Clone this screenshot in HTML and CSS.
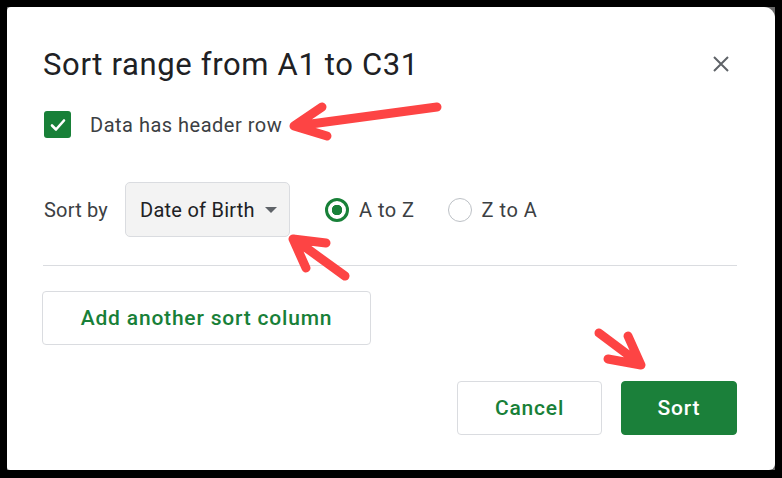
FILE: index.html
```html
<!DOCTYPE html>
<html lang="en">
<head>
    <meta charset="UTF-8">
    <meta name="viewport" content="width=device-width, initial-scale=1.0">
    <title>Sort range</title>
    <link rel="stylesheet" href="styles.css">
</head>
<body>

    <div class="frame">
        <div class="dialog">
            <div class="header">
                <h1 class="title">Sort range from A1 to C31</h1>
                <svg class="close" width="16" height="16" viewBox="0 0 16 16">
                    <path d="M1 1 L15 15 M15 1 L1 15" stroke="#5f6368" stroke-width="2" fill="none"/>
                </svg>
            </div>

            <label class="check-row">
                <span class="checkbox">
                    <svg width="18" height="18" viewBox="0 0 18 18">
                        <path d="M3 9.5 L7 13.5 L15 4.5" stroke="#fff" stroke-width="2.6" fill="none" stroke-linecap="round" stroke-linejoin="round"/>
                    </svg>
                </span>
                <span class="label">Data has header row</span>
            </label>

            <div class="sort-row">
                <span class="label">Sort by</span>
                <div class="select">
                    <span>Date of Birth</span>
                    <span class="caret"></span>
                </div>
                <div class="radios">
                    <span class="radio checked"></span>
                    <span class="label">A to Z</span>
                    <span class="radio"></span>
                    <span class="label">Z to A</span>
                </div>
            </div>

            <div class="divider"></div>

            <div class="add-row">
                <button class="btn outline add">Add another sort column</button>
            </div>

            <div class="footer">
                <button class="btn outline cancel">Cancel</button>
                <button class="btn primary sort">Sort</button>
            </div>
        </div>
    </div>

    <!-- red annotation arrows over the dialog -->
    <svg class="notes" width="782" height="478" viewBox="0 0 782 478">
        <g stroke="#fd4444" stroke-width="9" fill="none" stroke-linecap="round" stroke-linejoin="round">
            <path d="M437 107 L296 126 M322 107 L294 126 L327 136"/>
            <path d="M345 276 L294 239 M326 243 L293 239 L306 268"/>
            <path d="M599 333 L639 363 M608 359 L641 365 L628 336"/>
        </g>
    </svg>

</body>
</html>
```

FILE: styles.css
```css
/* page and outer frame */
body {
    margin: 0;
    padding: 7px 7px 8px 7px;
    background: #000;
    font-family: Roboto, "Liberation Sans", sans-serif;
    position: relative;
}

.frame {
    background: #6a6a6a;
    height: 463px;
}

.dialog {
    background: #fff;
    height: 100%;
    box-sizing: border-box;
    border-radius: 4px 11px 6px 3px;
    padding: 33px 38px 0 35px;
}

/* title row */
.header {
    display: flex;
    align-items: center;
    justify-content: space-between;
    height: 48px;
}

.title {
    margin: 0 0 0 1px;
    font-size: 31px;
    font-weight: 400;
    letter-spacing: 0.65px;
    color: #202124;
}

.close {
    margin-right: 8px;
}

.label {
    font-size: 20px;
    letter-spacing: 0.5px;
    color: #3c4043;
}

/* checkbox */
.check-row {
    display: flex;
    align-items: center;
    margin-top: 23px;
    height: 27px;
}

.checkbox {
    width: 27px;
    height: 27px;
    margin-left: 2px;
    border-radius: 3px;
    background: #188038;
    display: flex;
    align-items: center;
    justify-content: center;
}

.check-row .label {
    margin-left: 19px;
}

/* sort by row */
.sort-row {
    display: flex;
    align-items: center;
    margin-top: 44px;
    height: 55px;
}

.sort-row > .label {
    margin-left: 2px;
    letter-spacing: 0.2px;
}

.select {
    margin-left: 17px;
    height: 55px;
    box-sizing: border-box;
    padding: 0 12px 0 14px;
    border: 1px solid #dadce0;
    border-radius: 5px;
    background: #f3f3f3;
    display: flex;
    align-items: center;
    font-size: 20px;
    letter-spacing: 0.25px;
    color: #202124;
}

.caret {
    margin-left: 10px;
    width: 0;
    height: 0;
    border-left: 6px solid transparent;
    border-right: 6px solid transparent;
    border-top: 6px solid #5f6368;
}

.radios {
    display: flex;
    align-items: center;
    margin-left: 35px;
}

.radio {
    width: 24px;
    height: 24px;
    box-sizing: border-box;
    border-radius: 50%;
    border: 1.5px solid #bdc1c6;
    margin-right: 10px;
}

.radio.checked {
    border: 3px solid #188038;
    background: radial-gradient(circle, #188038 0 5px, #fff 5.5px);
}

.radios .label + .radio {
    margin-left: 33px;
}

.divider {
    margin-top: 28px;
    height: 1px;
    background: #dadce0;
    margin-left: 1px;
}

/* buttons */
.btn {
    font-family: Roboto, "Liberation Sans", sans-serif;
    font-size: 21px;
    font-weight: 500;
    letter-spacing: 0.8px;
    border-radius: 4px;
    cursor: pointer;
}

.btn.outline {
    background: #fff;
    border: 1px solid #dadce0;
    color: #188038;
}

.btn.primary {
    background: #1b803a;
    border: 1px solid #1b803a;
    color: #fff;
}

.add-row {
    margin-top: 25px;
}

.add {
    width: 329px;
    height: 54px;
}

.footer {
    display: flex;
    justify-content: flex-end;
    gap: 19px;
    margin-top: 36px;
}

.cancel {
    width: 145px;
    height: 54px;
}

.sort {
    width: 116px;
    height: 54px;
}

/* annotation overlay */
.notes {
    position: absolute;
    top: 0;
    left: 0;
}
```
